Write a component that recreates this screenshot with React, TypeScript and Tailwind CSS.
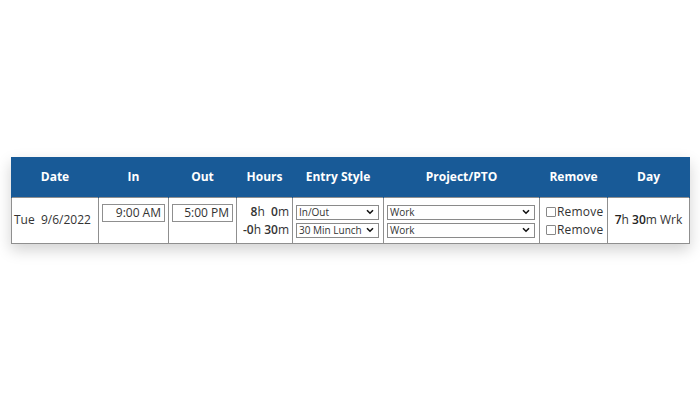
import React from "react";

const Chevron = () => (
  <svg width="8" height="6" viewBox="0 0 8 6" className="absolute right-[4px] top-1/2 -translate-y-1/2 pointer-events-none">
    <path d="M1 1.2 L4 4.2 L7 1.2" fill="none" stroke="#111" strokeWidth="1.6" />
  </svg>
);

const Sel = ({ value, w }: { value: string; w: string }) => (
  <div className={`relative ${w} h-[15px] border border-[#8a8a8a] bg-white`}>
    <div className="pl-[2px] text-[10px] leading-[13px] text-[#333]">{value}</div>
    <Chevron />
  </div>
);

const Box = () => (
  <span className="inline-block w-[10px] h-[10px] border border-[#888] rounded-[1px] bg-white mr-[1px] translate-y-[1px]" />
);

export default function App() {
  const th = "bg-[#185a97] text-white font-bold text-[12px] h-[40px] text-center border-x border-[#185a97] pt-[1px]";
  const td = "border border-[#8f8f8f] align-top text-[12px] text-[#333]";
  return (
    <div className="w-[700px] h-[400px] bg-white pt-[157px] pl-[11px]" style={{ fontFamily: "'Open Sans', sans-serif" }}>
      <table className="table-fixed border-collapse w-[678px] shadow-[0_6px_14px_rgba(0,0,0,0.18)]">
        <colgroup>
          <col className="w-[87px]" />
          <col className="w-[70px]" />
          <col className="w-[68px]" />
          <col className="w-[56px]" />
          <col className="w-[91px]" />
          <col className="w-[156px]" />
          <col className="w-[68px]" />
          <col className="w-[82px]" />
        </colgroup>
        <thead>
          <tr>
            <th className={th}>Date</th>
            <th className={th}>In</th>
            <th className={th}>Out</th>
            <th className={th}>Hours</th>
            <th className={th}>Entry Style</th>
            <th className={th}>Project/PTO</th>
            <th className={th}>Remove</th>
            <th className={th}>Day</th>
          </tr>
        </thead>
        <tbody>
          <tr className="h-[46px]">
            <td className={`${td} !align-middle pl-[2px] whitespace-nowrap`}>Tue&nbsp;&nbsp;9/6/2022</td>
            <td className={`${td} px-[3px] pt-[6px]`}>
              <div className="h-[18px] border border-[#8f8f8f] text-right pr-[3px] leading-[16px]">9:00 AM</div>
            </td>
            <td className={`${td} px-[3px] pt-[6px]`}>
              <div className="h-[18px] border border-[#8f8f8f] text-right pr-[3px] leading-[16px]">5:00 PM</div>
            </td>
            <td className={`${td} pr-[3px] pt-[5px] text-right leading-[18px] text-[#222]`}>
              <div>
                <span className="font-semibold">8</span>h&nbsp;&nbsp;<span className="font-semibold">0</span>m
              </div>
              <div>
                <span className="font-semibold">-0</span>h <span className="font-semibold">30</span>m
              </div>
            </td>
            <td className={`${td} px-[3px] pt-[7px]`}>
              <div className="flex flex-col gap-[3px]">
                <Sel value="In/Out" w="w-[83px]" />
                <Sel value="30 Min Lunch" w="w-[83px]" />
              </div>
            </td>
            <td className={`${td} px-[3px] pt-[7px]`}>
              <div className="flex flex-col gap-[3px]">
                <Sel value="Work" w="w-[148px]" />
                <Sel value="Work" w="w-[148px]" />
              </div>
            </td>
            <td className={`${td} pl-[6px] pt-[5px] leading-[18px] whitespace-nowrap tracking-[0.2px]`}>
              <div><Box />Remove</div>
              <div><Box />Remove</div>
            </td>
            <td className={`${td} !align-middle text-center whitespace-nowrap text-[#333]`}>
              <span className="font-semibold text-[#222]">7</span>h <span className="font-semibold text-[#222]">30</span>m Wrk
            </td>
          </tr>
        </tbody>
      </table>
    </div>
  );
}
